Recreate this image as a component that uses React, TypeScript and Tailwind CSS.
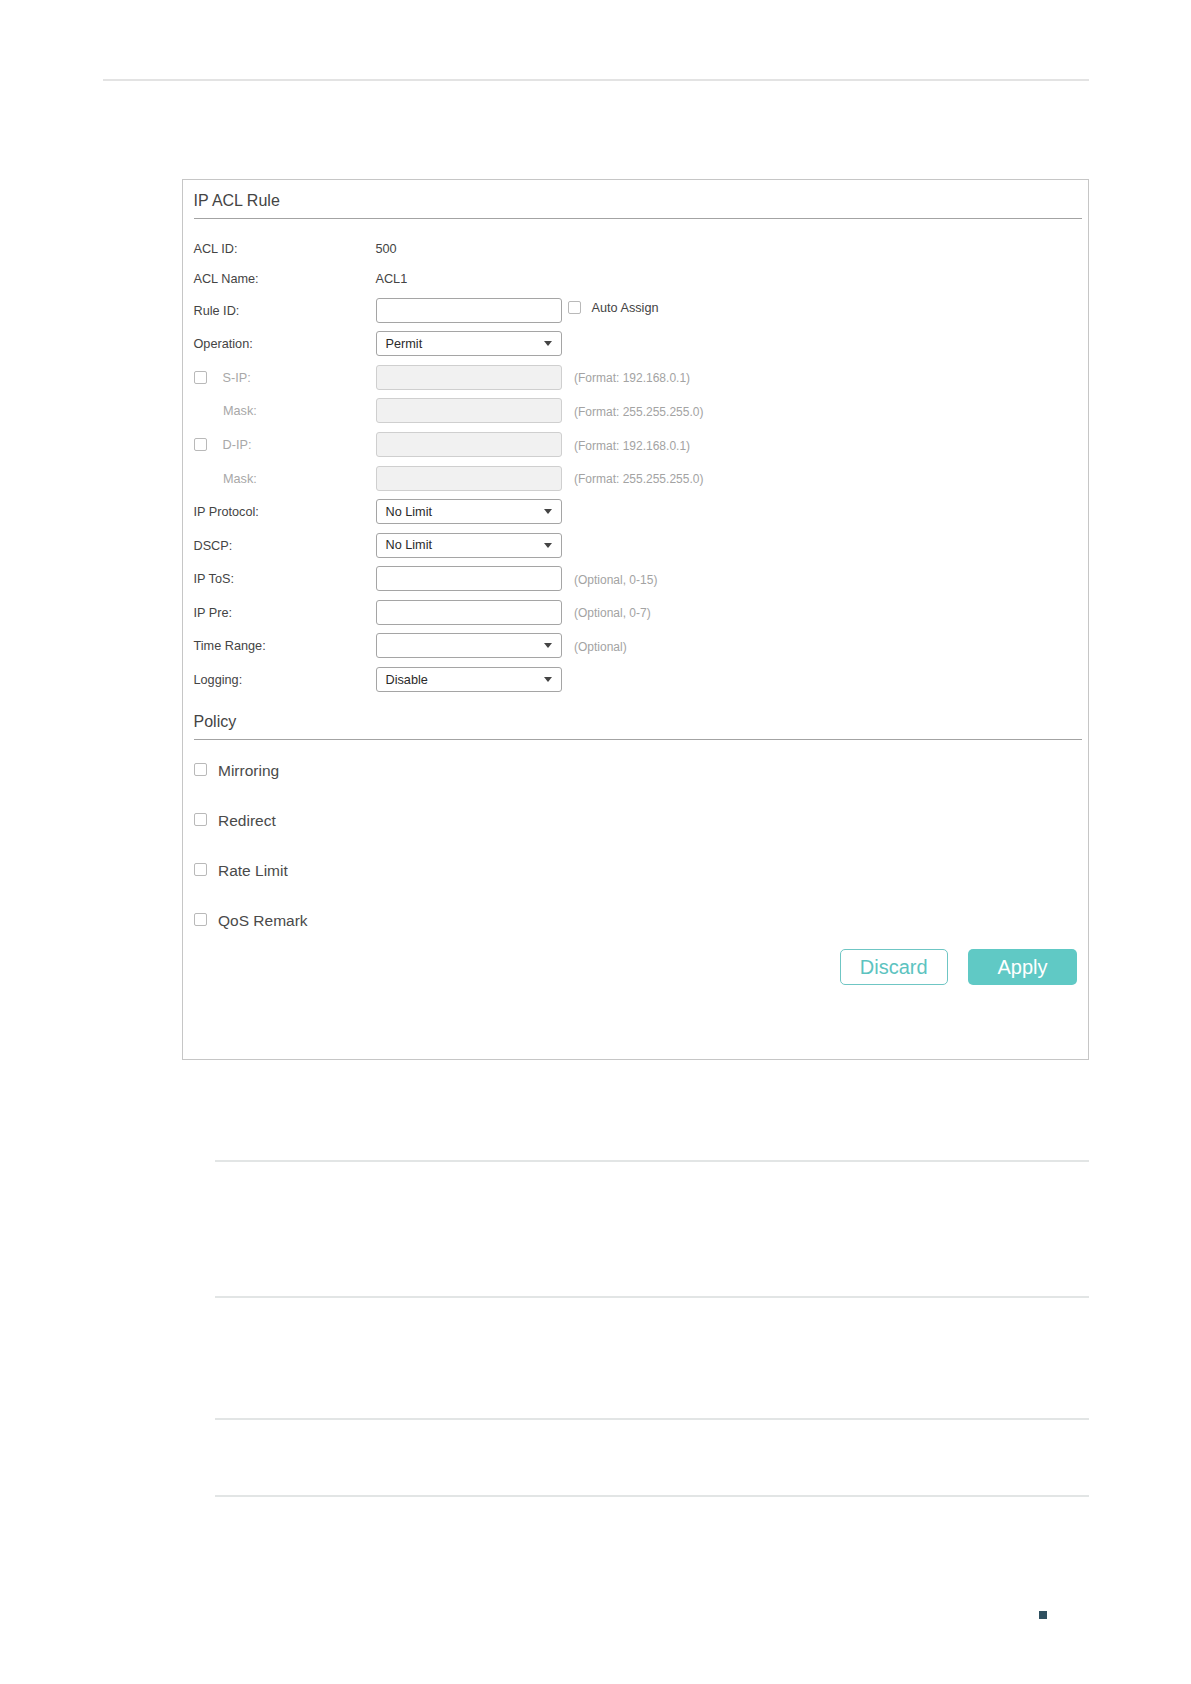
import React from "react";

const Arrow = () => (
  <svg width="8" height="5" viewBox="0 0 8 5" className="block">
    <path d="M0 0H8L4 5Z" fill="#444" />
  </svg>
);

const Check = ({ className = "" }: { className?: string }) => (
  <span className={"block w-[13px] h-[13px] border border-[#b9b9b9] rounded-[2px] bg-white shrink-0 " + className} />
);

const TextInput = ({ disabled = false }: { disabled?: boolean }) => (
  <div
    className={
      "w-[186px] h-[25px] rounded-[3px] border shrink-0 " +
      (disabled ? "bg-[#f1f1f1] border-[#cfcfcf]" : "bg-white border-[#a5a5a5]")
    }
  />
);

const Select = ({ value }: { value: string }) => (
  <div className="w-[186px] h-[25px] rounded-[3px] border border-[#a5a5a5] bg-white shrink-0 flex items-center justify-between pl-[9px] pr-[9px]">
    <span className="text-[12.7px] text-[#2a2a2a] leading-none pt-[1px]">{value}</span>
    <Arrow />
  </div>
);

const Hint = ({ children }: { children: React.ReactNode }) => (
  <span className="ml-[12.5px] pt-[2px] text-[12px] text-[#a3a3a3]">{children}</span>
);

type RowProps = {
  label: string;
  disabled?: boolean;
  checkbox?: boolean;
  indent?: boolean;
  children: React.ReactNode;
};

const Row = ({ label, disabled, checkbox, indent, children }: RowProps) => (
  <div className="flex items-center h-[33.57px]">
    <div className="w-[182px] shrink-0 flex items-center">
      {checkbox && <Check className="ml-[0.5px] mr-[15.5px]" />}
      <span
        className={
          "text-[12.7px] pt-[2px] " +
          (disabled ? "text-[#a8a8a8] " : "text-[#444] ") +
          (indent ? "ml-[29.5px]" : "")
        }
      >
        {label}
      </span>
    </div>
    {children}
  </div>
);

const PolicyItem = ({ label }: { label: string }) => (
  <div className="flex items-center h-[50px]">
    <Check className="ml-[0.5px] mr-[11px]" />
    <span className="text-[15.5px] text-[#4a4a4a] pt-[1px]">{label}</span>
  </div>
);

export default function App() {
  return (
    <div className="w-[1191px] h-[1684px] bg-white font-['Liberation_Sans',Arial,sans-serif] overflow-hidden">
      <div className="pt-[79px] pl-[103px]">
        <div className="w-[986px] h-[2px] bg-[#e3e3e3]" />
      </div>

      <div className="mt-[98px] ml-[181.5px] w-[907px] h-[881px] border border-[#c6c6c6] pl-[11px] pr-[6px]">
        <div className="pt-[12px] pb-[8px] leading-[18px] border-b border-[#a3a3a3] text-[16px] text-[#444]">
          IP ACL Rule
        </div>

        <div className="mt-[15.5px] flex items-center h-[29px] pt-[2px]">
          <span className="w-[182px] text-[12.7px] text-[#444]">ACL ID:</span>
          <span className="text-[12.7px] text-[#444]">500</span>
        </div>
        <div className="flex items-center h-[30px] pt-[2px]">
          <span className="w-[182px] text-[12.7px] text-[#444]">ACL Name:</span>
          <span className="text-[12.7px] text-[#444]">ACL1</span>
        </div>

        <Row label="Rule ID:">
          <TextInput />
          <div className="flex items-center ml-[6.5px] -mt-[5px]">
            <Check />
            <span className="ml-[10.5px] pt-[2px] text-[12.7px] text-[#444]">Auto Assign</span>
          </div>
        </Row>
        <Row label="Operation:">
          <Select value="Permit" />
        </Row>
        <Row label="S-IP:" disabled checkbox>
          <TextInput disabled />
          <Hint>(Format: 192.168.0.1)</Hint>
        </Row>
        <Row label="Mask:" disabled indent>
          <TextInput disabled />
          <Hint>(Format: 255.255.255.0)</Hint>
        </Row>
        <Row label="D-IP:" disabled checkbox>
          <TextInput disabled />
          <Hint>(Format: 192.168.0.1)</Hint>
        </Row>
        <Row label="Mask:" disabled indent>
          <TextInput disabled />
          <Hint>(Format: 255.255.255.0)</Hint>
        </Row>
        <Row label="IP Protocol:">
          <Select value="No Limit" />
        </Row>
        <Row label="DSCP:">
          <Select value="No Limit" />
        </Row>
        <Row label="IP ToS:">
          <TextInput />
          <Hint>(Optional, 0-15)</Hint>
        </Row>
        <Row label="IP Pre:">
          <TextInput />
          <Hint>(Optional, 0-7)</Hint>
        </Row>
        <Row label="Time Range:">
          <Select value="" />
          <Hint>(Optional)</Hint>
        </Row>
        <Row label="Logging:">
          <Select value="Disable" />
        </Row>

        <div className="pt-[16.5px] pb-[8px] leading-[18px] border-b border-[#a3a3a3] text-[16px] text-[#444]">
          Policy
        </div>

        <div className="mt-[5px]">
          <PolicyItem label="Mirroring" />
          <PolicyItem label="Redirect" />
          <PolicyItem label="Rate Limit" />
          <PolicyItem label="QoS Remark" />
        </div>

        <div className="mt-[4.5px] flex justify-end gap-[20.3px] pr-[4.5px]">
          <button className="w-[108px] h-[35.4px] rounded-[5px] border border-[#6fc6c4] bg-white text-[20px] text-[#5cc3c0] leading-none">
            Discard
          </button>
          <button className="w-[109px] h-[35.4px] rounded-[5px] bg-[#60c9c5] text-[20px] text-white leading-none">
            Apply
          </button>
        </div>
      </div>

      <div className="ml-[215px] w-[874px]">
        <div className="mt-[100px] h-[2px] bg-[#e2e5e5]" />
        <div className="mt-[134px] h-[2px] bg-[#e2e5e5]" />
        <div className="mt-[120px] h-[2px] bg-[#e2e5e5]" />
        <div className="mt-[75px] h-[2px] bg-[#e2e5e5]" />
      </div>

      <div className="mt-[114px] ml-[1039px] w-[8px] h-[8px] bg-[#2f5060]" />
    </div>
  );
}
